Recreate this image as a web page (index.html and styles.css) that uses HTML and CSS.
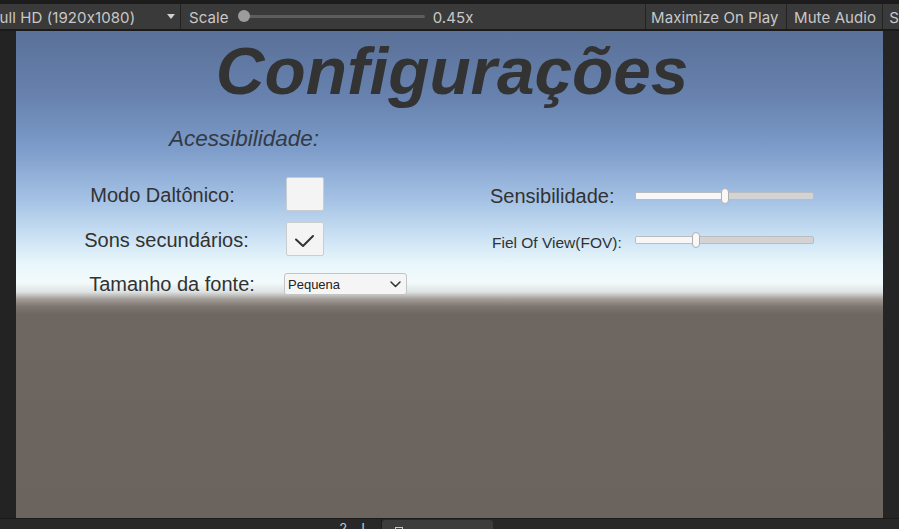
FILE: index.html
```html
<!DOCTYPE html>
<html lang="pt">
<head>
<meta charset="utf-8">
<title>Configurações</title>
<link rel="stylesheet" href="styles.css">
</head>
<body>
<div class="app">
  <div class="topstrip"></div>
  <div class="toolbar">
    <div class="tb-res">
      <span class="tb-res-text">Full HD (1920x1080)</span>
      <span class="caret"></span>
    </div>
    <div class="tb-scale">
      <span class="tb-label">Scale</span>
      <div class="scale-track"><span class="scale-knob"></span></div>
      <span class="tb-label">0.45x</span>
    </div>
    <div class="tb-btn tb-max">Maximize On Play</div>
    <div class="tb-btn tb-mute">Mute Audio</div>
    <div class="tb-btn tb-stats">Stats</div>
  </div>
  <div class="sepline"></div>
  <div class="main">
    <div class="gutter gutter-left"></div>
    <div class="game">
      <h1 class="title">Configurações</h1>
      <h2 class="section">Acessibilidade:</h2>
      <div class="settings">
        <div class="lbl lbl-modo">Modo Daltônico:</div>
        <div class="ctl"><div class="checkbox"></div></div>
        <div class="rlbl rlbl-sens">Sensibilidade:</div>
        <div class="slider slider-sens">
          <div class="track"><div class="fill" style="width:50%"></div><span class="knob" style="left:50%"></span></div>
        </div>

        <div class="lbl lbl-sons">Sons secundários:</div>
        <div class="ctl">
          <div class="checkbox">
            <svg width="38" height="34" viewBox="0 0 38 34"><polyline points="10,17.5 17,24 27,14" fill="none" stroke="#333" stroke-width="2" stroke-linecap="round" stroke-linejoin="round"/></svg>
          </div>
        </div>
        <div class="rlbl rlbl-fov">Fiel Of View(FOV):</div>
        <div class="slider slider-fov">
          <div class="track"><div class="fill" style="width:34%"></div><span class="knob" style="left:34%"></span></div>
        </div>

        <div class="lbl lbl-tam">Tamanho da fonte:</div>
        <div class="ctl ctl-drop">
          <div class="dropdown">
            <span class="drop-text">Pequena</span>
            <svg class="drop-caret" width="11" height="7" viewBox="0 0 11 7"><polyline points="1,1 5.5,5.5 10,1" fill="none" stroke="#333" stroke-width="1.5" stroke-linecap="round" stroke-linejoin="round"/></svg>
          </div>
        </div>
      </div>
    </div>
    <div class="gutter gutter-right"></div>
  </div>
  <div class="bottombar">
    <div class="bb-counts"><span>2</span><span>!</span></div>
    <div class="bb-tab">
      <svg class="bb-icon" width="8" height="8" viewBox="0 0 8 8"><rect x="0.5" y="0.5" width="7" height="7" fill="none" stroke="#c8c8c8"/></svg>
      <span>Console</span>
    </div>
  </div>
</div>
</body>
</html>
```

FILE: styles.css
```css
* { box-sizing: border-box; }

html, body {
  margin: 0;
  padding: 0;
  width: 899px;
  height: 529px;
  overflow: hidden;
  background: #232323;
}

.app {
  display: flex;
  flex-direction: column;
  width: 899px;
  height: 529px;
  font-family: Inter, "Noto Sans", sans-serif;
  font-feature-settings: "calt" 0;
}

.topstrip {
  height: 4px;
  background: #1c1c1c;
}

.toolbar {
  height: 25px;
  display: flex;
  align-items: stretch;
  background: #3a3a3a;
  color: #c8c8c8;
  font-size: 15px;
  letter-spacing: 0.1px;
  white-space: nowrap;
  overflow: hidden;
}

.tb-res {
  width: 181px;
  flex: 0 0 181px;
  display: flex;
  align-items: center;
  padding-top: 2px;
  border-right: 1px solid #232323;
  overflow: hidden;
  position: relative;
}

.tb-res-text {
  margin-left: -9px;
}

.caret {
  position: absolute;
  left: 167px;
  top: 10px;
  width: 0;
  height: 0;
  border-left: 4px solid transparent;
  border-right: 4px solid transparent;
  border-top: 5px solid #d0d0d0;
}

.tb-scale {
  flex: 0 0 465px;
  display: flex;
  align-items: center;
  padding-left: 8px;
  padding-top: 2px;
  border-right: 1px solid #232323;
}

.scale-track {
  position: relative;
  width: 187px;
  height: 3px;
  margin: -2px 8px 0 9px;
  background: #5e5e5e;
  border-radius: 2px;
}

.scale-knob {
  position: absolute;
  left: 0;
  top: -5px;
  width: 12px;
  height: 12px;
  border-radius: 50%;
  background: #9c9c9c;
}

.tb-btn {
  display: flex;
  align-items: center;
  padding: 2px 6px 0;
  border-right: 1px solid #232323;
}

.tb-max { flex: 0 0 141px; padding-left: 5px; }
.tb-mute { flex: 0 0 95px; padding-left: 7px; }
.tb-stats { flex: 0 0 auto; padding-left: 6px; border-right: none; }

.sepline {
  height: 2px;
  background: #1a1a1a;
}

.main {
  display: flex;
  height: 487px;
}

.gutter { flex: 0 0 16px; }
.gutter-left { background: #232323; }
.gutter-right { background: #252525; }

.game {
  flex: 0 0 867px;
  height: 487px;
  padding-top: 5px;
  font-family: "Liberation Sans", Arial, sans-serif;
  color: #323232;
  background: linear-gradient(to bottom,
    #5a7198 0px,
    #6883b0 69px,
    #7e9dca 119px,
    #a5c2e5 169px,
    #cfe5f5 210px,
    #eaf7fb 234px,
    #f2fafb 252px,
    #dde2e2 261px,
    #a49e99 268px,
    #7e7772 275px,
    #6d6661 283px,
    #6b635e 487px);
}

.title {
  margin: 0;
  padding-left: 5px;
  font-size: 67.5px;
  line-height: 70px;
  font-weight: bold;
  font-style: italic;
  text-align: center;
  color: #333333;
}

.section {
  margin: 20px 0 0 153px;
  font-size: 22.5px;
  line-height: 26px;
  font-weight: normal;
  font-style: italic;
  color: #333a44;
}

.settings {
  margin-top: 25px;
  margin-left: 48px;
  display: grid;
  grid-template-columns: 220px 206px 145px 179px;
  grid-template-rows: 34px 34px 29px;
  row-gap: 11px;
  align-items: start;
}

.lbl {
  width: 200px;
  font-size: 20px;
  line-height: 23px;
  text-align: center;
  white-space: nowrap;
  margin-top: 7px;
}

.lbl-modo { padding-right: 3px; }
.lbl-sons { padding-left: 5px; }
.lbl-tam { padding-left: 16px; margin-top: 6px; }

.ctl { display: flex; }
.ctl-drop { margin-top: 6px; }

.checkbox {
  width: 38px;
  height: 34px;
  margin-left: 2px;
  background: #f4f4f4;
  border: 1px solid #c9ccd0;
  border-radius: 2px;
}

.checkbox svg { display: block; margin: -1px; }

.dropdown {
  position: relative;
  width: 123px;
  height: 22px;
  display: flex;
  align-items: center;
  padding-left: 3px;
  background: #f5f5f5;
  border: 1px solid #c4c4c4;
  border-radius: 3px;
  font-size: 13px;
  color: #222;
}

.drop-caret {
  position: absolute;
  right: 5px;
  top: 7px;
}

.rlbl {
  white-space: nowrap;
}

.rlbl-sens {
  font-size: 20px;
  line-height: 23px;
  margin-top: 8px;
}

.rlbl-fov {
  font-size: 15.5px;
  line-height: 18px;
  margin-top: 12px;
  padding-left: 2px;
}

.slider {
  height: 16px;
  display: flex;
  align-items: center;
}

.slider-sens { margin-top: 11px; }
.slider-fov { margin-top: 10px; }

.track {
  position: relative;
  width: 179px;
  height: 8px;
  background: #d3d3d3;
  border: 1px solid #b9bcc0;
  border-radius: 2px;
}

.fill {
  height: 100%;
  background: #f7f7f7;
}

.knob {
  position: absolute;
  top: -5px;
  width: 8px;
  height: 16px;
  margin-left: -4px;
  background: #f8f8f8;
  border: 1px solid #b0b0b0;
  border-radius: 4px;
}

.bottombar {
  flex: 1;
  position: relative;
  background: #282828;
  border-top: 1px solid #1a1a1a;
  overflow: hidden;
  display: flex;
  color: #c8c8c8;
  font-size: 13px;
}

.bb-counts {
  flex: 0 0 382px;
  display: flex;
  justify-content: flex-end;
  gap: 14px;
  padding-right: 16px;
  padding-top: 1px;
  border-right: 1px solid #1a1a1a;
}

.bb-tab {
  margin-top: 1px;
  flex: 0 0 111px;
  display: flex;
  align-items: flex-start;
  gap: 7px;
  padding: 7px 0 0 13px;
  background: #3c3c3c;
  border-radius: 3px 3px 0 0;
}

.bb-icon { display: block; }
```
